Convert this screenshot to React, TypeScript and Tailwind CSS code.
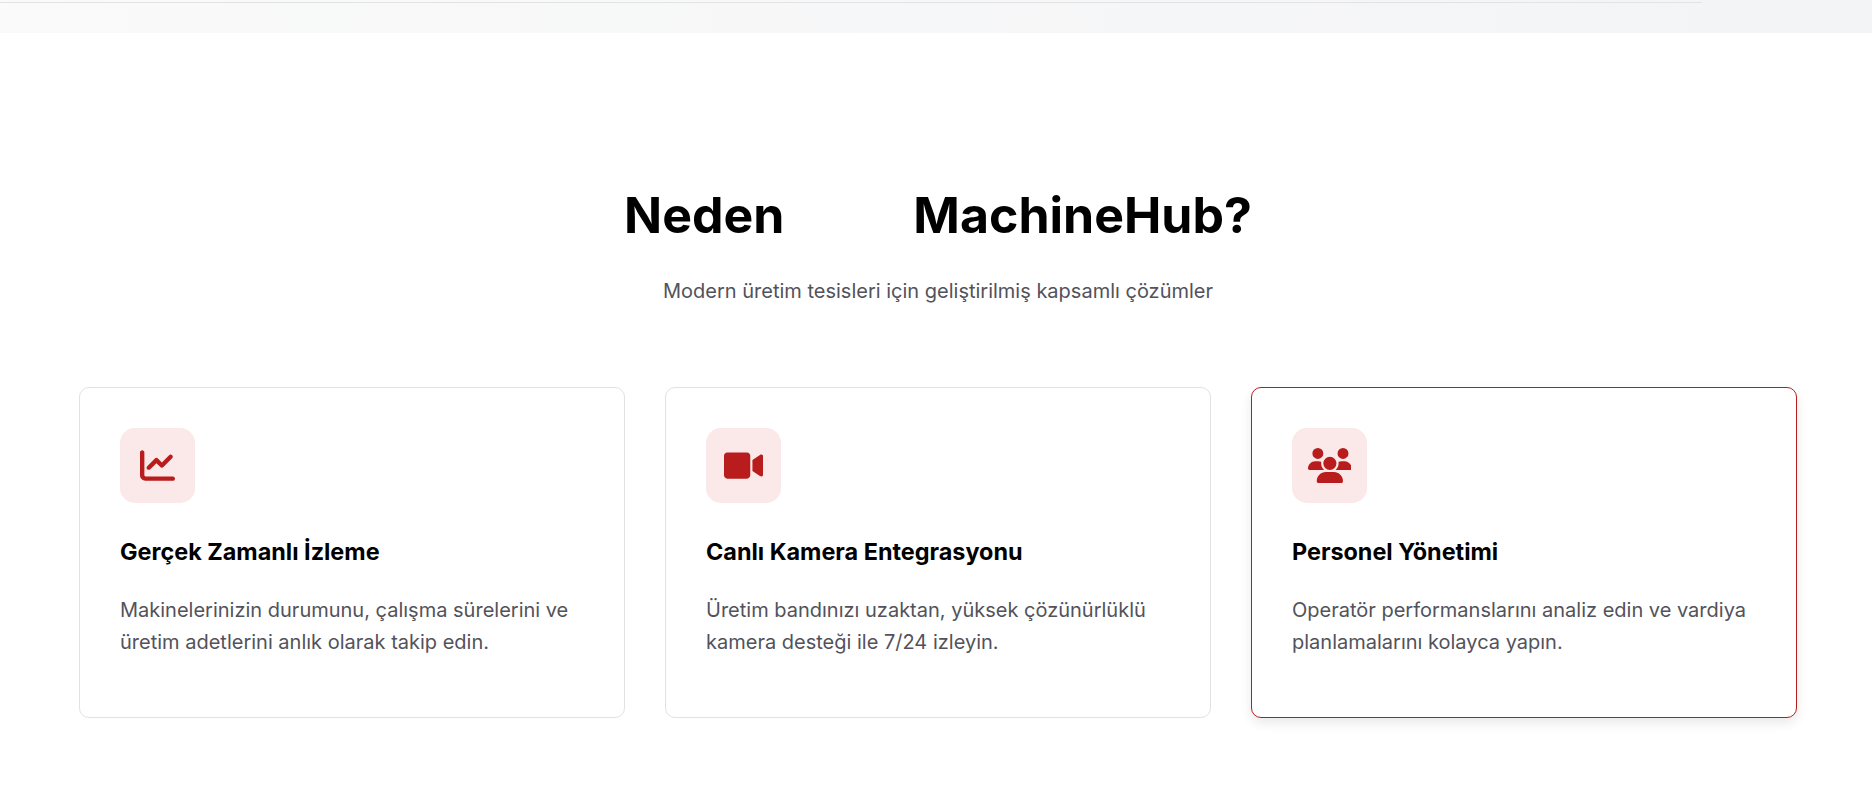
import { FaChartLine, FaUsers } from "react-icons/fa6"
import { FaVideo } from "react-icons/fa"
import type { ReactNode } from "react"

type Feature = {
  icon: ReactNode
  title: string
  text: ReactNode
  active?: boolean
}

const features: Feature[] = [
  {
    icon: <FaChartLine className="size-[35px]" />,
    title: "Gerçek Zamanlı İzleme",
    text: "Makinelerinizin durumunu, çalışma sürelerini ve üretim adetlerini anlık olarak takip edin.",
  },
  {
    icon: <FaVideo className="h-[35px] w-[39.4px]" />,
    title: "Canlı Kamera Entegrasyonu",
    text: "Üretim bandınızı uzaktan, yüksek çözünürlüklü kamera desteği ile 7/24 izleyin.",
  },
  {
    icon: <FaUsers className="h-[35px] w-[43.75px]" />,
    title: "Personel Yönetimi",
    text: "Operatör performanslarını analiz edin ve vardiya planlamalarını kolayca yapın.",
    active: true,
  },
]

function FeatureCard({ feature }: { feature: Feature }) {
  return (
    <div
      className={
        feature.active
          ? "h-[331px] rounded-[10px] border border-[#b91c1c] bg-white p-10 shadow-[0_5px_12px_rgba(0,0,0,0.09)]"
          : "h-[331px] rounded-[10px] border border-[#e2e2e2] bg-white p-10"
      }
    >
      <div className="flex size-[75px] items-center justify-center rounded-[15px] bg-[#fbe8e8] text-[#b91c1c]">
        {feature.icon}
      </div>
      <h3 className="mt-[32px] text-[23.4px] leading-[34px] font-bold text-black">{feature.title}</h3>
      <p className="mt-[25px] text-[20px] leading-[32px] text-[#52525b]">{feature.text}</p>
    </div>
  )
}

export default function App() {
  return (
    <div className="min-h-[805px] bg-white font-['Inter',sans-serif]">
      <div className="h-[33px] bg-gradient-to-r from-[#fafafa] to-[#f3f4f6]">
        <div className="h-[3px] w-[1702px] border-b border-[#e2e3e6]" />
      </div>

      <section className="pt-[152px] pr-[75px] pl-[79px]">
        <h2 className="flex items-center justify-center gap-[129px] text-[50px] leading-[60px] font-bold text-black">
          <span>Neden</span>
          <span>MachineHub?</span>
        </h2>
        <p className="mt-[31px] text-center text-[20px] leading-[30px] text-[#52525b]">
          Modern üretim tesisleri için geliştirilmiş kapsamlı çözümler
        </p>

        <div className="mt-[81px] grid grid-cols-3 gap-10">
          {features.map((f) => (
            <FeatureCard key={f.title} feature={f} />
          ))}
        </div>
      </section>
    </div>
  )
}
